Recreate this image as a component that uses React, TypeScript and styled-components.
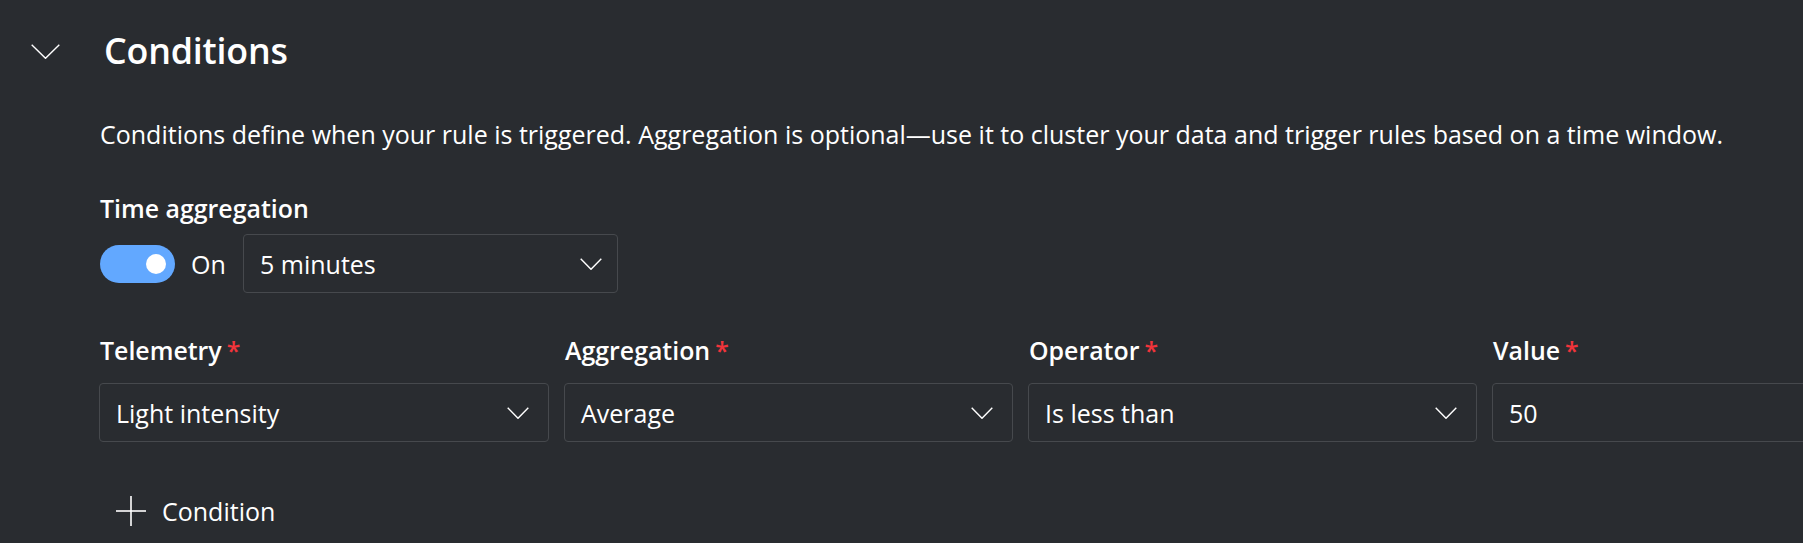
import React, { useState } from "react";
import styled, { createGlobalStyle } from "styled-components";

const GlobalStyle = createGlobalStyle`
  html, body {
    margin: 0;
    padding: 0;
    background: #292c30;
    overflow: hidden;
  }
  body {
    font-family: "Open Sans", "Noto Sans", "Liberation Sans", sans-serif;
    color: #ffffff;
  }
`;

const Page = styled.div`
  width: 1803px;
  height: 543px;
  overflow: hidden;
  background: #292c30;
`;

const Section = styled.section`
  display: flex;
  flex-direction: column;
`;

const Header = styled.div`
  display: flex;
  align-items: center;
  height: 102px;
  padding-left: 30px;
`;

const CollapseButton = styled.button`
  display: flex;
  align-items: center;
  justify-content: center;
  width: 30px;
  height: 16px;
  padding: 0;
  margin: 0 44px 0 0;
  background: transparent;
  border: none;
  color: #ffffff;
  cursor: pointer;
`;

const Title = styled.h2`
  margin: 0;
  font-size: 35.8px;
  font-weight: 600;
  letter-spacing: -0.2px;
  color: #ffffff;
  line-height: 1;
`;

const Body = styled.div`
  display: flex;
  flex-direction: column;
  padding-left: 100px;
  padding-top: 17px;
`;

const Description = styled.p`
  margin: 0;
  font-size: 25px;
  line-height: 30px;
  color: #ffffff;
  white-space: nowrap;
`;

const Label = styled.label`
  display: flex;
  align-items: baseline;
  gap: 5px;
  font-size: 24.9px;
  font-weight: 600;
  color: #ffffff;
  line-height: 30px;
  white-space: nowrap;
`;

const Required = styled.span`
  color: #f1343b;
  font-weight: 600;
`;

const TimeBlock = styled.div`
  display: flex;
  flex-direction: column;
  margin-top: 44px;
  gap: 11px;
`;

const ToggleRow = styled.div`
  display: flex;
  align-items: center;
`;

const Track = styled.button<{ $on: boolean }>`
  position: relative;
  width: 75px;
  height: 38px;
  padding: 0;
  border: none;
  border-radius: 19px;
  background: ${(p) => (p.$on ? "#62a8ff" : "transparent")};
  cursor: pointer;
  flex: none;
`;

const Knob = styled.span<{ $on: boolean }>`
  position: absolute;
  top: 9px;
  left: ${(p) => (p.$on ? "46px" : "9px")};
  width: 20px;
  height: 20px;
  border-radius: 50%;
  background: #ffffff;
`;

const ToggleText = styled.span`
  width: 52px;
  font-size: 25px;
  line-height: 30px;
  margin-left: 16px;
  color: #ffffff;
  flex: none;
`;

const SelectBox = styled.div<{ $width: number; $padRight: number }>`
  box-sizing: border-box;
  display: flex;
  align-items: center;
  justify-content: space-between;
  width: ${(p) => p.$width}px;
  height: 59px;
  padding: 0 ${(p) => p.$padRight}px 0 16px;
  border: 1px solid #46494d;
  border-radius: 4px;
  background: #292c30;
  font-size: 25px;
  line-height: 30px;
  color: #ffffff;
  flex: none;
`;

const SelectValue = styled.span`
  white-space: nowrap;
`;

const Grid = styled.div`
  display: grid;
  grid-template-columns: 450px repeat(3, 449px);
  column-gap: 15px;
  margin-top: 42px;
  margin-left: -1px;
`;

const Field = styled.div`
  display: flex;
  flex-direction: column;
  gap: 18px;
`;

const FieldLabel = styled(Label)`
  padding-left: 1px;
`;

const AddButton = styled.button`
  display: flex;
  align-items: center;
  gap: 16px;
  margin-top: 54px;
  margin-left: 16px;
  padding: 0;
  background: transparent;
  border: none;
  color: #ffffff;
  font-family: inherit;
  font-size: 25px;
  line-height: 30px;
  cursor: pointer;
  align-self: flex-start;
`;

const Chevron = ({ w, h }: { w: number; h: number }) => (
  <svg width={w} height={h} viewBox={`0 0 ${w} ${h}`} fill="none">
    <polyline
      points={`0.7,0.7 ${w / 2},${h - 0.7} ${w - 0.7},0.7`}
      stroke="#ffffff"
      strokeWidth="1.4"
    />
  </svg>
);

const Plus = () => (
  <svg width="30" height="30" viewBox="0 0 30 30" fill="none">
    <line x1="15" y1="0" x2="15" y2="30" stroke="#ffffff" strokeWidth="1.6" />
    <line x1="0" y1="15" x2="30" y2="15" stroke="#ffffff" strokeWidth="1.6" />
  </svg>
);

const Select = ({ value, width, padRight }: { value: string; width: number; padRight: number }) => (
  <SelectBox $width={width} $padRight={padRight}>
    <SelectValue>{value}</SelectValue>
    <Chevron w={22} h={12} />
  </SelectBox>
);

const fields = [
  { label: "Telemetry", value: "Light intensity", select: true, width: 450 },
  { label: "Aggregation", value: "Average", select: true, width: 449 },
  { label: "Operator", value: "Is less than", select: true, width: 449 },
  { label: "Value", value: "50", select: false, width: 449 },
];

export default function App() {
  const [on, setOn] = useState(true);
  return (
    <Page>
      <GlobalStyle />
      <Section>
        <Header>
          <CollapseButton aria-label="Collapse">
            <Chevron w={29} h={15} />
          </CollapseButton>
          <Title>Conditions</Title>
        </Header>
        <Body>
          <Description>
            Conditions define when your rule is triggered. Aggregation is optional—use it to cluster your data and trigger rules based on a time window.
          </Description>
          <TimeBlock>
            <Label>Time aggregation</Label>
            <ToggleRow>
              <Track $on={on} onClick={() => setOn(!on)} aria-label="Time aggregation">
                <Knob $on={on} />
              </Track>
              <ToggleText>{on ? "On" : "Off"}</ToggleText>
              <Select value="5 minutes" width={375} padRight={15} />
            </ToggleRow>
          </TimeBlock>
          <Grid>
            {fields.map((f) => (
              <Field key={f.label}>
                <FieldLabel>
                  {f.label}
                  <Required>*</Required>
                </FieldLabel>
                {f.select ? (
                  <Select value={f.value} width={f.width} padRight={19} />
                ) : (
                  <SelectBox $width={f.width} $padRight={19}>
                    <SelectValue>{f.value}</SelectValue>
                  </SelectBox>
                )}
              </Field>
            ))}
          </Grid>
          <AddButton>
            <Plus />
            Condition
          </AddButton>
        </Body>
      </Section>
    </Page>
  );
}
